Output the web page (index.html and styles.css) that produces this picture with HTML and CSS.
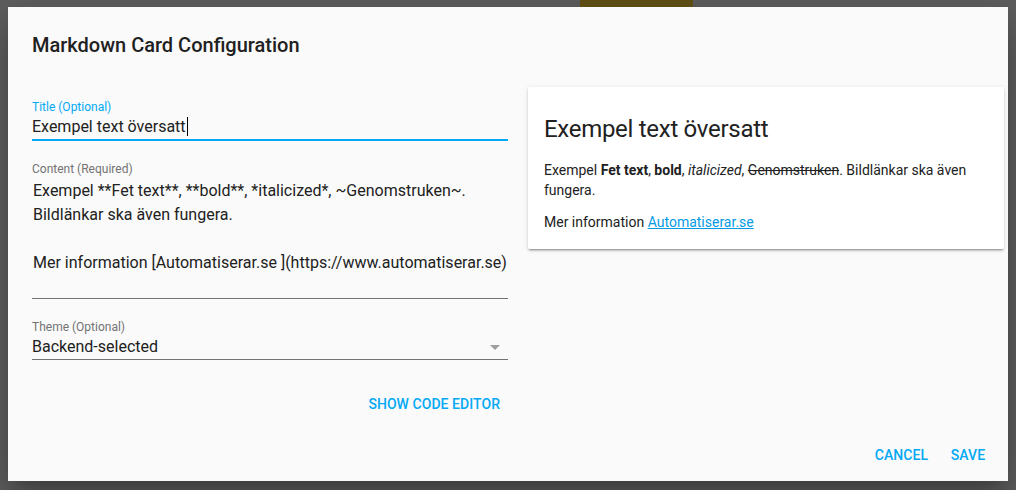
FILE: index.html
```
<!DOCTYPE html>
<html lang="en">
<head>
    <meta charset="UTF-8">
    <meta name="viewport" content="width=device-width, initial-scale=1.0">
    <title>Markdown Card Configuration</title>
    <link rel="stylesheet" href="styles.css">
</head>
<body>

    <!-- The page behind the scrim, only a sliver of it shows above the dialog -->
    <div class="backdrop" aria-hidden="true">
        <div class="backdrop__cell backdrop__cell--first"></div>
        <div class="backdrop__rule"></div>
        <div class="backdrop__cell backdrop__cell--second"></div>
        <div class="backdrop__tab"></div>
        <div class="backdrop__cell backdrop__cell--third"></div>
        <div class="backdrop__rule"></div>
        <div class="backdrop__cell backdrop__cell--rest"></div>
    </div>

    <section class="dialog" role="dialog" aria-labelledby="dialogTitle">
        <h2 class="dialog__title" id="dialogTitle">Markdown Card Configuration</h2>

        <div class="dialog__content">
            <div class="editor">
                <div class="field field--focused">
                    <label class="field__label" for="cardTitle">Title (Optional)</label>
                    <div class="field__input" id="cardTitle">Exempel text översatt<span class="caret"></span></div>
                </div>

                <div class="field">
                    <label class="field__label" for="cardContent">Content (Required)</label>
                    <div class="field__input field__input--area" id="cardContent">Exempel **Fet text**, **bold**, *italicized*, ~Genomstruken~.<br>Bildlänkar ska även fungera.<br><br>Mer information [Automatiserar.se ](https://www.automatiserar.se)</div>
                </div>

                <div class="field field--select">
                    <label class="field__label" for="cardTheme">Theme (Optional)</label>
                    <div class="field__input" id="cardTheme">Backend-selected<span class="field__arrow"></span></div>
                </div>

                <div class="editor__toggle">
                    <button class="button">Show code editor</button>
                </div>
            </div>

            <div class="preview">
                <article class="card">
                    <h1 class="card__header">Exempel text översatt</h1>
                    <div class="card__body">
                        <p>Exempel <strong>Fet text</strong>, <strong>bold</strong>, <em>italicized</em>, <del>Genomstruken</del>. Bildlänkar ska även fungera.</p>
                        <p>Mer information <a href="#" class="card__link">Automatiserar.se</a></p>
                    </div>
                </article>
            </div>
        </div>

        <div class="dialog__actions">
            <button class="button">Cancel</button>
            <button class="button">Save</button>
        </div>
    </section>

</body>
</html>
```

FILE: styles.css
```
:root {
    --color-scrim: #5f5f5f;
    --color-dialog: #fafafa;
    --color-card: #ffffff;
    --color-text: #212121;
    --color-secondary: #737373;
    --color-primary: #03a9f4;
    --color-link: #039be5;

    --font-family: Roboto, "Noto Sans", "Liberation Sans", sans-serif;
    --font-weight-medium: 500;
}

*,
*::before,
*::after {
    box-sizing: border-box;
}

body {
    margin: 0;
    height: 490px;
    overflow: hidden;
    font-family: var(--font-family);
    color: var(--color-text);
    background-color: var(--color-scrim);
}

/* Sliver of the page under the scrim */
.backdrop {
    display: flex;
    height: 7px;
}

.backdrop__cell--first { width: 389px; }
.backdrop__cell--second { width: 190px; }
.backdrop__cell--third { width: 189px; }
.backdrop__cell--rest { flex: 1; }

.backdrop__rule {
    width: 1px;
    background-color: #565656;
}

.backdrop__tab {
    width: 113px;
    background-color: #5d4b14;
}

/* Dialog */
.dialog {
    display: flex;
    flex-direction: column;
    width: 1000px;
    height: 474px;
    margin-left: 8px;
    background-color: var(--color-dialog);
    box-shadow: 0 11px 15px -7px rgba(0, 0, 0, 0.2),
                0 24px 38px 3px rgba(0, 0, 0, 0.14),
                0 9px 46px 8px rgba(0, 0, 0, 0.12);
}

.dialog__title {
    margin: 0;
    padding: 22px 24px 0;
    font-size: 20px;
    line-height: 32px;
    font-weight: var(--font-weight-medium);
}

.dialog__content {
    display: flex;
    align-items: flex-start;
    gap: 20px;
    margin-top: 26px;
    padding: 0 4px 0 24px;
}

.dialog__actions {
    display: flex;
    justify-content: flex-end;
    margin-top: auto;
    padding: 8px;
}

/* Editor form */
.editor {
    width: 476px;
    padding-top: 12px;
}

.field + .field { margin-top: 20px; }

.field__label {
    display: block;
    font-size: 12px;
    line-height: 16px;
    color: var(--color-secondary);
}

.field__input {
    position: relative;
    font-size: 16px;
    line-height: 24px;
    padding-left: 1px;
    border-bottom: 1px solid var(--color-secondary);
}

.field__input--area {
    height: 120px;
    margin-top: 2px;
}

.field--focused .field__label { color: var(--color-primary); }
.field--focused .field__input {
    padding-left: 0;
    border-bottom: 2px solid var(--color-primary);
}

.caret {
    display: inline-block;
    width: 1px;
    height: 19px;
    margin-left: 1px;
    vertical-align: -4px;
    background-color: #000;
}

.field--select .field__input { padding-left: 0; }

/* Dropdown triangle sits over the field's right edge */
.field__arrow {
    position: absolute;
    right: 8px;
    top: 10px;
    width: 0;
    height: 0;
    border-left: 5px solid transparent;
    border-right: 5px solid transparent;
    border-top: 5px solid #9e9e9e;
}

.editor__toggle {
    display: flex;
    justify-content: flex-end;
    margin-top: 26px;
}

/* Text buttons */
.button {
    min-width: 64px;
    height: 36px;
    padding: 0 8px;
    border: none;
    background: transparent;
    font-family: var(--font-family);
    font-size: 14px;
    font-weight: var(--font-weight-medium);
    letter-spacing: 0.05px;
    text-transform: uppercase;
    color: var(--color-primary);
    cursor: pointer;
}

/* Card preview */
.preview { width: 476px; }

.card {
    background-color: var(--color-card);
    border-radius: 2px;
    box-shadow: 0 2px 2px 0 rgba(0, 0, 0, 0.14),
                0 1px 5px 0 rgba(0, 0, 0, 0.12),
                0 3px 1px -2px rgba(0, 0, 0, 0.2);
}

.card__header {
    margin: 0;
    padding: 26px 16px 0;
    font-size: 24px;
    line-height: 32px;
    font-weight: 400;
    letter-spacing: -0.012em;
}

.card__body {
    padding: 15px 16px 17px;
    font-size: 14px;
    line-height: 20px;
}

.card__body p { margin: 0; }
.card__body p + p { margin-top: 12px; }

.card__link {
    color: var(--color-link);
    text-decoration: underline;
}
```
